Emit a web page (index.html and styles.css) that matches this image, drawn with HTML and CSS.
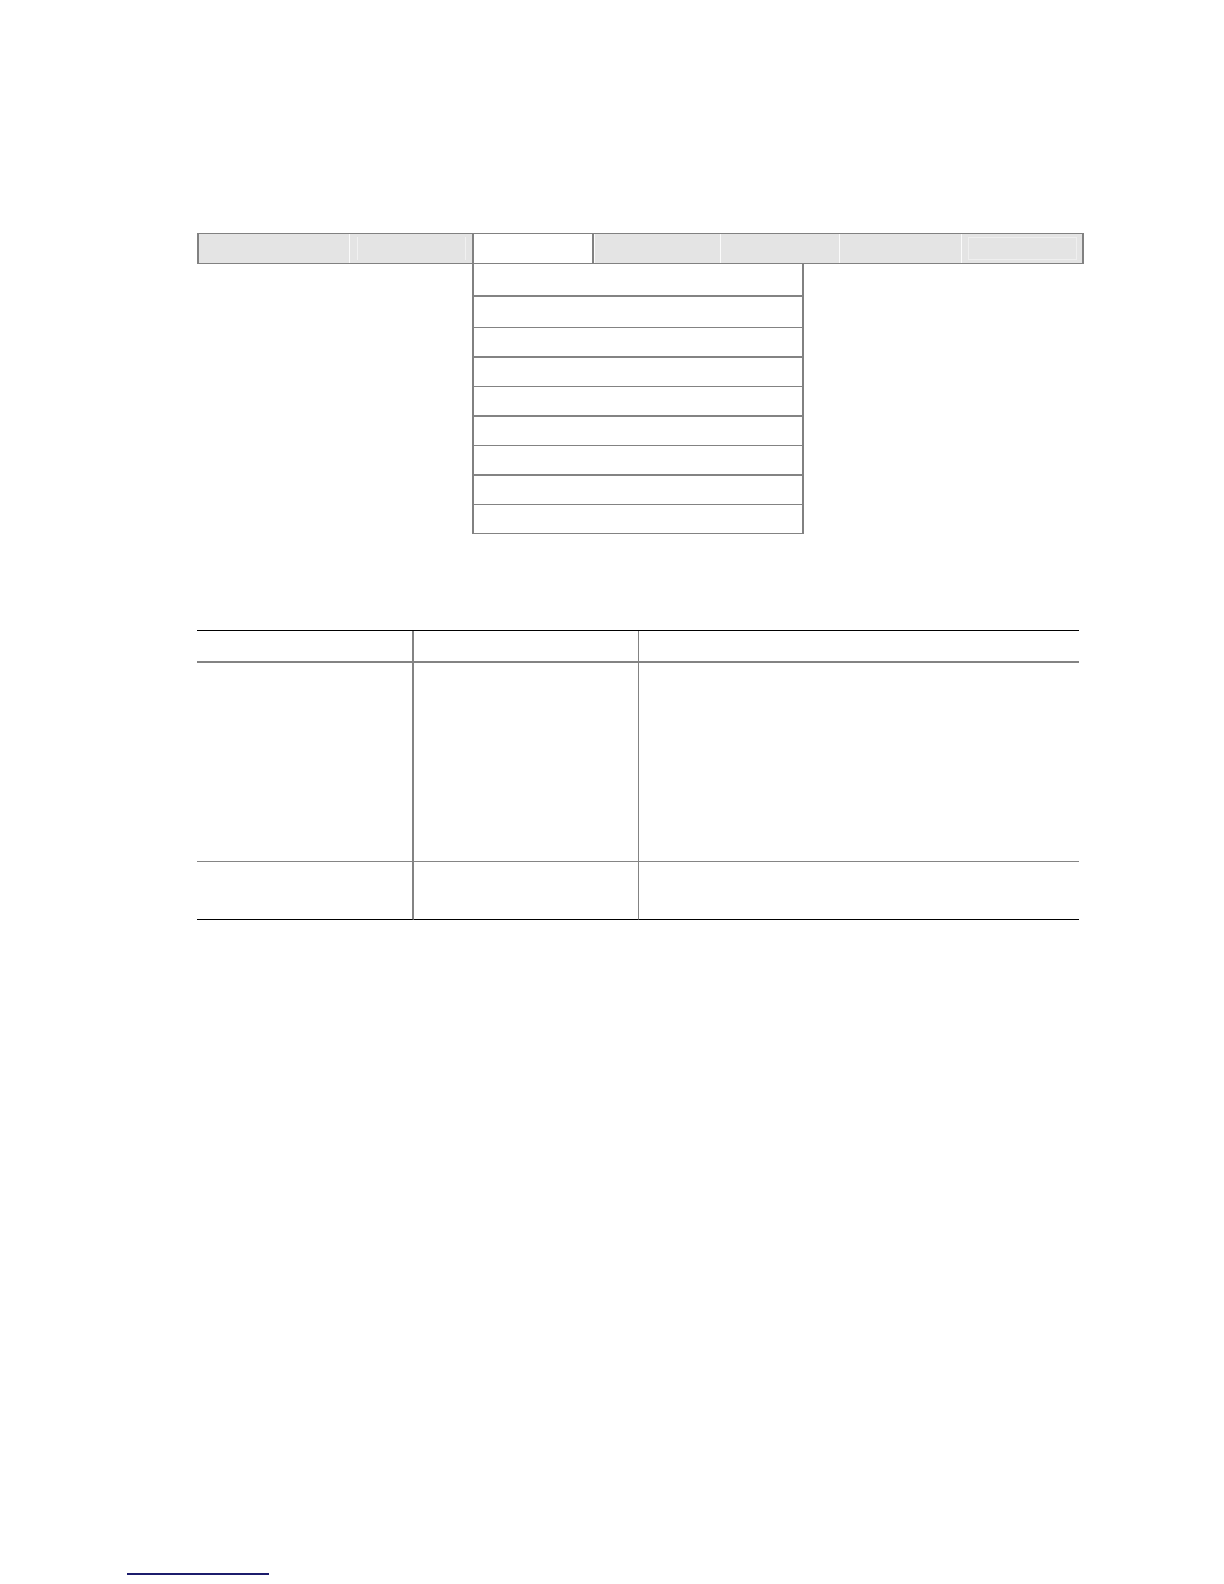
FILE: index.html
```html
<!DOCTYPE html>
<html lang="en">
<head>
<meta charset="utf-8">
<title>Menu layout</title>
<link rel="stylesheet" href="styles.css">
</head>
<body>
<div class="page">
  <div class="menubar">
    <div class="item w1 first"></div>
    <div class="item w2"><span class="glow"></span></div>
    <div class="item w3 selected"></div>
    <div class="item w4"></div>
    <div class="item w5"></div>
    <div class="item w6"></div>
    <div class="item w7 last"><span class="glow"></span></div>
  </div>
  <div class="dropdown">
    <div class="row tall thick"></div>
    <div class="row tall"></div>
    <div class="row thick"></div>
    <div class="row"></div>
    <div class="row thick"></div>
    <div class="row"></div>
    <div class="row thick"></div>
    <div class="row"></div>
    <div class="row"></div>
  </div>
  <div class="table">
    <div class="cell head c1"></div>
    <div class="cell head c2"></div>
    <div class="cell head c3"></div>
    <div class="cell body c1"></div>
    <div class="cell body c2"></div>
    <div class="cell body c3"></div>
    <div class="cell foot c1"></div>
    <div class="cell foot c2"></div>
    <div class="cell foot c3"></div>
  </div>
  <div class="footnote-rule"></div>
</div>
</body>
</html>
```

FILE: styles.css
```css
html, body {
  margin: 0;
  padding: 0;
  background: #ffffff;
  font-family: "Liberation Sans", Arial, sans-serif;
}

.page {
  padding-top: 233px;
}

.menubar {
  display: flex;
  margin-left: 197px;
  width: 887px;
  height: 31px;
  box-sizing: border-box;
  border-top: 1px solid #818181;
  border-bottom: 1px solid #818181;
  background: #e4e4e4;
}

.item {
  position: relative;
  box-sizing: border-box;
  height: 100%;
  border-left: 1px solid #fbfbfb;
}

.item.first { border-left: 2px solid #818181; }
.item.last { border-right: 2px solid #818181; }

.item.selected {
  background: #ffffff;
  border-left: 2px solid #818181;
  border-right: 2px solid #818181;
}

.w1 { width: 152px; }
.w2 { width: 123px; }
.w3 { width: 122px; }
.w4 { width: 126px; }
.w5 { width: 119px; }
.w6 { width: 122px; }
.w7 { width: 123px; }

.glow {
  position: absolute;
  top: 3px;
  bottom: 3px;
  left: 7px;
  right: 6px;
  border-left: 1px solid #f1f1f1;
  border-right: 1px solid #f1f1f1;
}

.w7 .glow {
  left: 6px;
  right: 5px;
  border: 1px solid #efefef;
}

.dropdown {
  margin-left: 472px;
  width: 332px;
  box-sizing: border-box;
  border-left: 2px solid #818181;
  border-right: 2px solid #818181;
  padding-top: 1px;
}

.row {
  height: 28px;
  border-bottom: 1px solid #838383;
}

.row.tall { height: 30px; }
.row.thick { border-bottom-width: 2px; }

.table {
  display: grid;
  grid-template-columns: 217px 225px 440px;
  grid-template-rows: 32px 199px 58px;
  margin-left: 197px;
  margin-top: 96px;
  width: 882px;
  border-top: 1px solid #000000;
}

.cell {
  box-sizing: border-box;
}

.c1 { border-right: 2px solid #838383; }
.c2 { border-right: 1px solid #838383; }

.head { border-bottom: 2px solid #838383; }
.body { border-bottom: 1px solid #858585; }
.foot { border-bottom: 1px solid #000000; }

.footnote-rule {
  margin-left: 127px;
  margin-top: 653px;
  width: 142px;
  height: 2px;
  background: #1c1c6c;
}
```
